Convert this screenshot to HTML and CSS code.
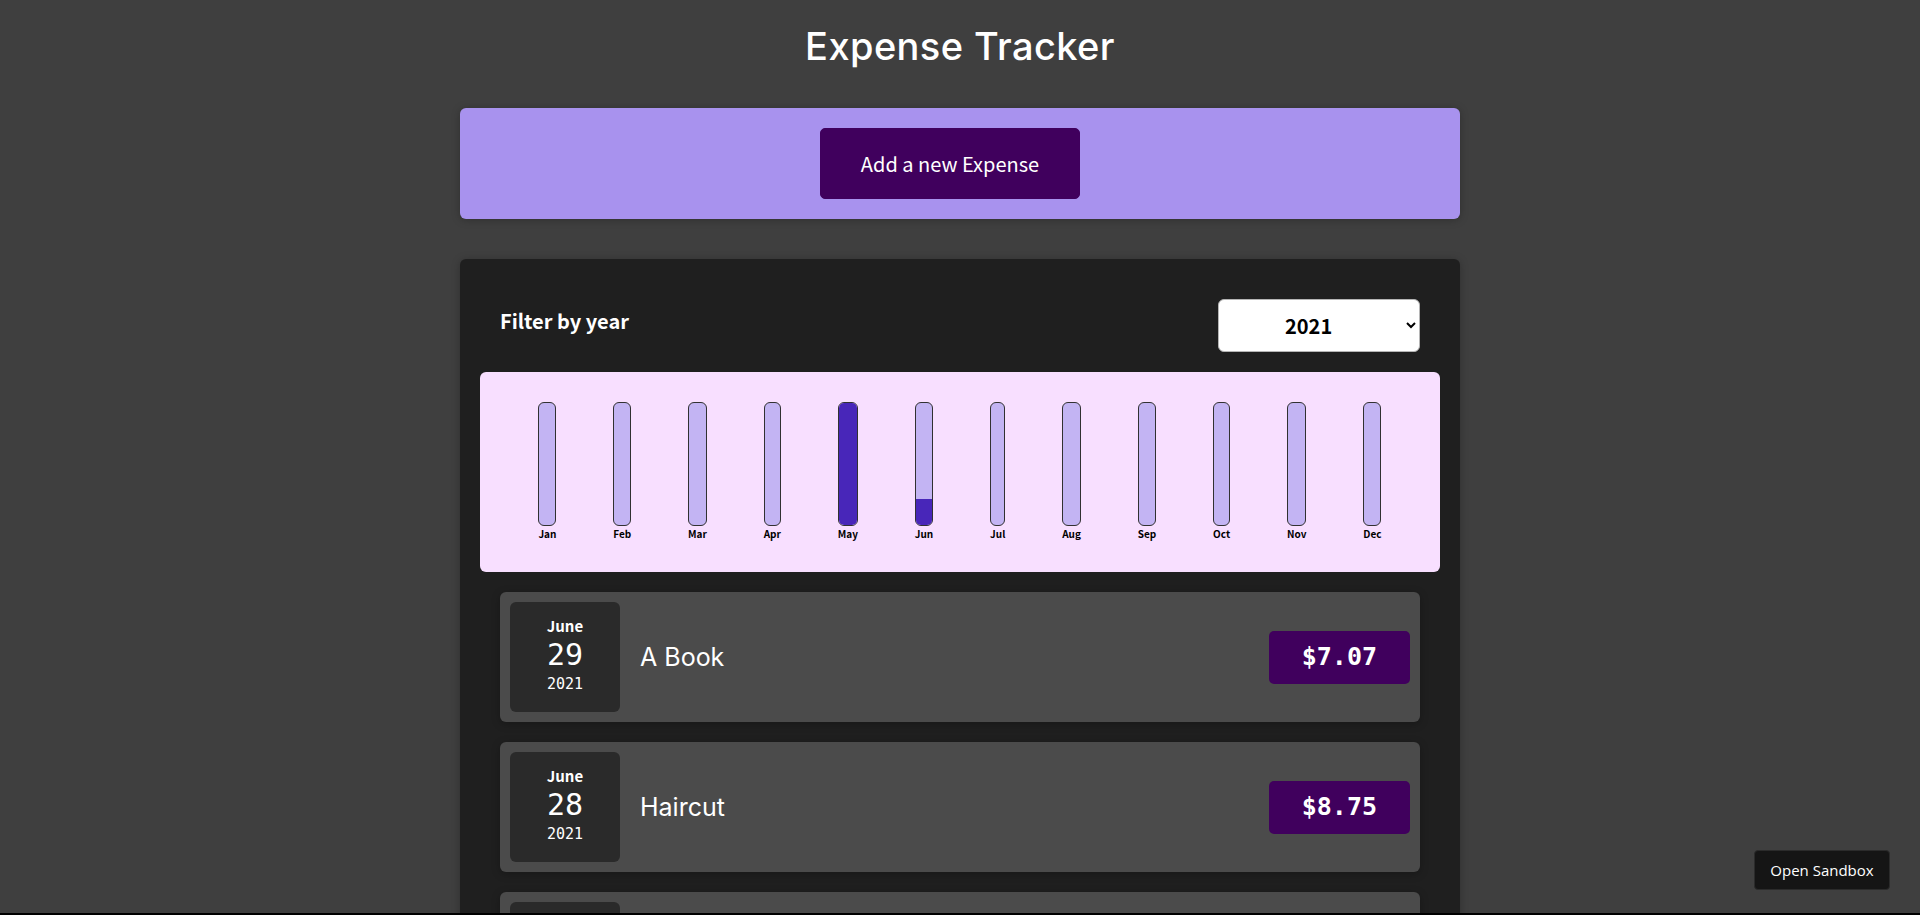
FILE: index.html
```html
<!DOCTYPE html>
<html lang="en">
<head>
<meta charset="utf-8">
<title>Expense Tracker</title>
<link rel="stylesheet" href="styles.css">
</head>
<body>
<div class="app">
  <h1 class="app-title">Expense Tracker</h1>

  <div class="new-expense card">
    <button class="new-expense__btn" type="button">Add a new Expense</button>
  </div>

  <div class="expenses card">
    <div class="expenses-filter">
      <div class="expenses-filter__control">
        <label class="expenses-filter__label">Filter by year</label>
        <select class="expenses-filter__select">
          <option>2022</option>
          <option selected>2021</option>
          <option>2020</option>
          <option>2019</option>
        </select>
      </div>
    </div>

    <div class="chart">
      <div class="chart-bar"><div class="chart-bar__inner"><div class="chart-bar__fill" style="height:0%"></div></div><div class="chart-bar__label">Jan</div></div>
      <div class="chart-bar"><div class="chart-bar__inner"><div class="chart-bar__fill" style="height:0%"></div></div><div class="chart-bar__label">Feb</div></div>
      <div class="chart-bar"><div class="chart-bar__inner"><div class="chart-bar__fill" style="height:0%"></div></div><div class="chart-bar__label">Mar</div></div>
      <div class="chart-bar"><div class="chart-bar__inner"><div class="chart-bar__fill" style="height:0%"></div></div><div class="chart-bar__label">Apr</div></div>
      <div class="chart-bar"><div class="chart-bar__inner"><div class="chart-bar__fill" style="height:100%"></div></div><div class="chart-bar__label">May</div></div>
      <div class="chart-bar"><div class="chart-bar__inner"><div class="chart-bar__fill" style="height:21%"></div></div><div class="chart-bar__label">Jun</div></div>
      <div class="chart-bar"><div class="chart-bar__inner"><div class="chart-bar__fill" style="height:0%"></div></div><div class="chart-bar__label">Jul</div></div>
      <div class="chart-bar"><div class="chart-bar__inner"><div class="chart-bar__fill" style="height:0%"></div></div><div class="chart-bar__label">Aug</div></div>
      <div class="chart-bar"><div class="chart-bar__inner"><div class="chart-bar__fill" style="height:0%"></div></div><div class="chart-bar__label">Sep</div></div>
      <div class="chart-bar"><div class="chart-bar__inner"><div class="chart-bar__fill" style="height:0%"></div></div><div class="chart-bar__label">Oct</div></div>
      <div class="chart-bar"><div class="chart-bar__inner"><div class="chart-bar__fill" style="height:0%"></div></div><div class="chart-bar__label">Nov</div></div>
      <div class="chart-bar"><div class="chart-bar__inner"><div class="chart-bar__fill" style="height:0%"></div></div><div class="chart-bar__label">Dec</div></div>
    </div>

    <ul class="expenses-list">
      <li class="expense-item">
        <div class="expense-date">
          <div class="expense-date__month">June</div>
          <div class="expense-date__day">29</div>
          <div class="expense-date__year">2021</div>
        </div>
        <div class="expense-item__description">
          <h2 class="expense-item__title">A Book</h2>
          <div class="expense-item__price">$7.07</div>
        </div>
      </li>
      <li class="expense-item">
        <div class="expense-date">
          <div class="expense-date__month">June</div>
          <div class="expense-date__day">28</div>
          <div class="expense-date__year">2021</div>
        </div>
        <div class="expense-item__description">
          <h2 class="expense-item__title">Haircut</h2>
          <div class="expense-item__price">$8.75</div>
        </div>
      </li>
      <li class="expense-item">
        <div class="expense-date">
          <div class="expense-date__month">June</div>
          <div class="expense-date__day">12</div>
          <div class="expense-date__year">2021</div>
        </div>
        <div class="expense-item__description">
          <h2 class="expense-item__title">Lunch</h2>
          <div class="expense-item__price">$12.40</div>
        </div>
      </li>
    </ul>
  </div>
</div>

<a class="sandbox-btn" href="#">Open Sandbox</a>
<div class="bottom-edge"></div>
</body>
</html>
```

FILE: styles.css
```css
* {
  box-sizing: border-box;
}

html {
  font-size: 20px;
  font-family: "Noto Sans CJK JP", "Noto Sans", sans-serif;
}

body {
  margin: 0;
  background-color: #3f3f3f;
}

.app {
  display: flex;
  flex-direction: column;
  align-items: center;
}

.app-title {
  margin: 0;
  padding-top: 22px;
  font-family: "Inter", "Noto Sans", sans-serif;
  font-weight: 500;
  font-size: 38px;
  letter-spacing: 0.4px;
  line-height: 48px;
  color: #ffffff;
  text-align: center;
}

.card {
  border-radius: 6px;
  box-shadow: 0 1px 8px rgba(0, 0, 0, 0.25);
}

.new-expense {
  background-color: #a892ee;
  padding: 1rem;
  margin: 38px auto 40px;
  width: 50rem;
  text-align: center;
}

.new-expense__btn {
  font: inherit;
  font-size: 20px;
  line-height: 29px;
  cursor: pointer;
  padding: 1rem 2rem;
  border: 1px solid #40005d;
  background-color: #40005d;
  color: #ffffff;
  border-radius: 5px;
  margin-right: 1rem;
}

.expenses {
  padding: 1rem;
  background-color: #1f1f1f;
  width: 50rem;
}

.expenses-filter {
  color: #ffffff;
  padding: 0 1rem;
}

.expenses-filter__control {
  display: flex;
  width: 100%;
  align-items: center;
  justify-content: space-between;
  margin: 1rem 0;
}

.expenses-filter__label {
  font-weight: bold;
  line-height: 29px;
  margin-bottom: 0.5rem;
}

.expenses-filter__select {
  font: inherit;
  font-weight: bold;
  line-height: 29px;
  height: 53px;
  width: 202px;
  padding: 0 3rem 0 3.1rem;
  border-radius: 6px;
  border: 1px solid #b5b5b5;
  background-color: #ffffff;
  color: #000000;
}

.chart {
  padding: 1.5rem;
  border-radius: 6px;
  background-color: #f8dfff;
  display: flex;
  justify-content: space-around;
  height: 10rem;
}

.chart-bar {
  height: 100%;
  display: flex;
  flex-direction: column;
  align-items: center;
}

.chart-bar__inner {
  flex: 1;
  width: 100%;
  border: 1px solid #313131;
  border-radius: 6px;
  background-color: #c3b4f3;
  overflow: hidden;
  display: flex;
  flex-direction: column;
  justify-content: flex-end;
}

.chart-bar__fill {
  background-color: #4826b9;
  width: 100%;
}

.chart-bar__label {
  font-weight: bold;
  font-size: 0.5rem;
  line-height: 16px;
  color: #000000;
  text-align: center;
}

.expenses-list {
  list-style: none;
  margin: 0;
  padding: 0 1rem;
}

.expense-item {
  display: flex;
  align-items: center;
  box-shadow: 0 2px 8px rgba(0, 0, 0, 0.25);
  padding: 0.5rem;
  margin: 1rem 0;
  border-radius: 6px;
  background-color: #4b4b4b;
}

.expense-date {
  display: flex;
  flex-direction: column;
  width: 5.5rem;
  height: 5.5rem;
  padding-bottom: 4px;
  background-color: #2a2a2a;
  color: #ffffff;
  border-radius: 6px;
  align-items: center;
  justify-content: center;
  flex-shrink: 0;
}

.expense-date__month {
  font-size: 0.75rem;
  font-weight: bold;
  line-height: 22px;
}

.expense-date__day {
  font-family: "DejaVu Sans Mono", "Liberation Mono", monospace;
  font-size: 1.5rem;
  font-weight: normal;
  line-height: 36px;
}

.expense-date__year {
  font-family: "DejaVu Sans Mono", "Liberation Mono", monospace;
  font-size: 0.75rem;
  line-height: 22px;
}

.expense-item__description {
  display: flex;
  flex: 1;
  align-items: center;
  justify-content: flex-start;
}

.expense-item__title {
  flex: 1;
  margin: 0 1rem;
  font-family: "Inter", "Noto Sans", sans-serif;
  font-weight: 400;
  font-size: 1.25rem;
  color: #ffffff;
}

.expense-item__price {
  font-family: "DejaVu Sans Mono", "Liberation Mono", monospace;
  font-size: 1.25rem;
  font-weight: bold;
  line-height: 51px;
  height: 53px;
  color: #ffffff;
  background-color: #40005d;
  padding: 0 33px;
  border-radius: 5px;
}

.sandbox-btn {
  position: fixed;
  right: 30px;
  bottom: 25px;
  width: 136px;
  height: 40px;
  display: flex;
  align-items: center;
  justify-content: center;
  background-color: #151515;
  border: 1px solid #2b2b2b;
  border-radius: 4px;
  color: #ffffff;
  font-family: "Open Sans", "Noto Sans", sans-serif;
  font-size: 15px;
  text-decoration: none;
}

.bottom-edge {
  position: fixed;
  left: 0;
  right: 0;
  bottom: 0;
  height: 2px;
  background-color: #000000;
}
```
